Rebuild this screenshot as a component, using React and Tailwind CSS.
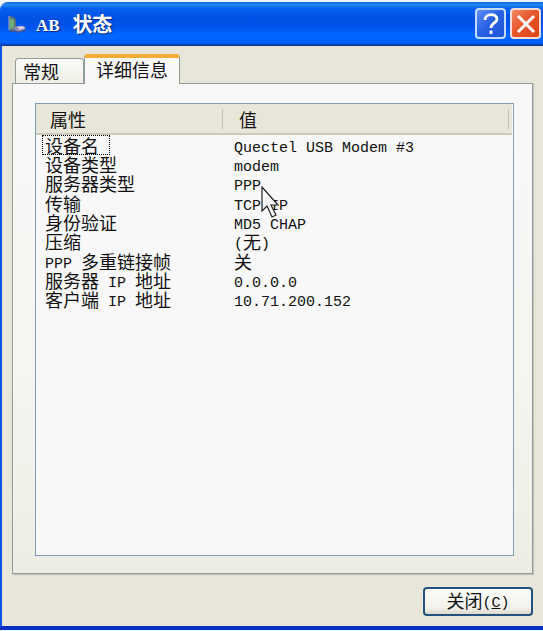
import React, { useState } from 'react';

const rows = [
  { name: '设备名', value: 'Quectel USB Modem #3' },
  { name: '设备类型', value: 'modem' },
  { name: '服务器类型', value: 'PPP' },
  { name: '传输', value: 'TCP/IP' },
  { name: '身份验证', value: 'MD5 CHAP' },
  { name: '压缩', value: '(无)' },
  { name: 'PPP 多重链接帧', value: '关' },
  { name: '服务器 IP 地址', value: '0.0.0.0' },
  { name: '客户端 IP 地址', value: '10.71.200.152' },
];

// Latin runs are set in a half-width mono face, Chinese runs in the full-width face
const MixedText = ({ children }) =>
  children.split(/([\x20-\x7e]+)/).filter(Boolean).map((part, i) =>
    /^[\x20-\x7e]/.test(part) ? (
      <span key={i} className="font-['Liberation_Mono',monospace] text-[15px] leading-[0px] align-[1px] whitespace-pre">{part}</span>
    ) : (
      <span key={i}>{part}</span>
    )
  );

const ConnectionIcon = () => (
  <svg className="w-5 h-5 shrink-0" viewBox="0 0 20 20" aria-hidden="true">
    <path d="M1 2l5 1 2 3v8l-3 4-4-2z" fill="#56727c" />
    <path d="M2 4l4 2v7l-4 2z" fill="#6fae78" />
    <path d="M1 2v14" stroke="#a9b4b8" />
    <path d="M4 14l5-2 7 0 2 3-8 3z" fill="#8d88ae" />
    <path d="M9 13l5-1 3 2-5 2z" fill="#d6cfe2" />
    <path d="M2 17l8 1 8-2" stroke="#514f78" fill="none" />
  </svg>
);

const Cursor = () => (
  <svg className="absolute z-10 left-[27px] top-3 w-[21px] h-[32px] pointer-events-none" viewBox="0 0 21 32" aria-hidden="true">
    <path d="M1 1v24l5-5 5 11 4-2-5-10h7z" fill="#f8f8f8" stroke="#222" strokeWidth="1.2" />
  </svg>
);

const TitleBar = () => (
  <header className="flex items-center h-11 pl-2 pr-0 rounded-tl-lg border-b border-[#123a91] bg-[linear-gradient(#1264dc_0%,#2288ff_7%,#0562ee_14%,#0050e4_38%,#0055ee_60%,#0066ff_75%,#0062ff_94%,#0041bd_100%)]">
    <ConnectionIcon />
    <h1 className="flex-1 pl-2 text-xl leading-6 font-bold text-white [text-shadow:1px_1px_1px_#0a2a80]">
      <span className="font-['Liberation_Serif',serif] text-[17px] leading-[0px] align-[1px] whitespace-pre">AB   </span>
      状态
    </h1>
    <div className="flex gap-1 pr-0.5">
      <button type="button" aria-label="帮助" className="flex items-center justify-center w-[31px] h-[31px] rounded-[4px] border-2 border-[#c3dcfa] bg-[linear-gradient(135deg,#6290f5,#2a62e6_45%,#1c54d8)]">
        <svg className="w-6 h-6 shrink-0" viewBox="0 0 24 24" fill="none" stroke="#fff" strokeWidth="2.8">
          <path d="M6 8c0-7 12-7 12-1 0 4-6 4-6 9M12 18.500v3.500" />
        </svg>
      </button>
      <button type="button" aria-label="关闭窗口" className="flex items-center justify-center w-[31px] h-[31px] rounded-[4px] border-2 border-[#f5dcd8] bg-[linear-gradient(135deg,#f08a66,#e8562a_45%,#dd4414)]">
        <svg className="w-6 h-6 shrink-0" viewBox="0 0 24 24" fill="none" stroke="#fff" strokeWidth="3">
          <path d="M4 4l16 16M20 4L4 20" />
        </svg>
      </button>
    </div>
  </header>
);

const Tabs = ({ active, onChange }) => (
  <div role="tablist" className="flex items-end pl-[3px]">
    <button
      type="button"
      role="tab"
      aria-selected={active === 'general'}
      onClick={() => onChange('general')}
      className="w-[69px] h-[25px] pl-[7px] text-left rounded-t-[4px] border border-b-0 border-[#919b9c] bg-[linear-gradient(#fcfcfa,#efeee5)] text-lg leading-6"
    >
      常规
    </button>
    <button
      type="button"
      role="tab"
      aria-selected={active === 'details'}
      onClick={() => onChange('details')}
      className="relative w-24 h-[30px] -mb-px pb-1 rounded-t-[4px] border border-t-4 border-b-0 border-[#919b9c] border-t-[#f4ad32] bg-[#f8f8f8] text-lg leading-[22px]"
    >
      详细信息
    </button>
  </div>
);

const DetailsTable = () => (
  <div className="flex-1 border border-[#7f9db9] bg-[#f8f8f8] pr-px">
    <table className="w-full table-fixed border-separate border-spacing-0 text-left">
      <colgroup>
        <col className="w-[188px]" />
        <col />
      </colgroup>
      <thead>
        <tr className="bg-[#e7e6d8]">
          <th scope="col" className="h-[31px] p-0 border-b-2 border-[#cdc9b8] font-normal leading-6">
            <div className="pl-[14px] mr-px border-r border-[#c3c0b0] leading-5">属性</div>
          </th>
          <th scope="col" className="h-[31px] p-0 border-b-2 border-[#cdc9b8] font-normal leading-6">
            <div className="pl-[15px] mr-[3px] border-r border-[#c3c0b0] leading-5">值</div>
          </th>
        </tr>
      </thead>
    </table>
    <table className="w-full h-[174px] table-fixed border-separate border-spacing-0 text-left">
      <colgroup>
        <col className="w-[188px]" />
        <col />
      </colgroup>
      <tbody>
        {rows.map((row, i) => (
          <tr key={row.name}>
            <th scope="row" className="p-0 pl-[7px] font-normal leading-[18px] whitespace-nowrap">
              <span className={i === 0 ? 'block w-[66px] pl-0.5 outline-1 outline-dotted outline-black' : 'block pl-0.5'}>
                <MixedText>{row.name}</MixedText>
              </span>
            </th>
            <td className="p-0 pl-[10px] leading-[18px] whitespace-nowrap">
              <div className="relative">
                <MixedText>{row.value}</MixedText>
                {row.name === '服务器类型' && <Cursor />}
              </div>
            </td>
          </tr>
        ))}
      </tbody>
    </table>
  </div>
);

const App = () => {
  const [tab, setTab] = useState('details');

  return (
    <div className="flex flex-col min-h-screen pt-0.5 pb-px bg-[#eef4f6] font-['Noto_Sans_CJK_SC',sans-serif] text-lg text-[#111]">
      <div className="flex flex-col flex-1 rounded-tl-lg border-b-4 border-[#0831c4] bg-[#e7e6d8]">
        <TitleBar />
        <main className="flex flex-col flex-1 pl-[10px] pr-[10px] pt-2 pb-[10px] border-l-2 border-[#0a55e6]">
          <Tabs active={tab} onChange={setTab} />
          <section role="tabpanel" className="flex flex-col flex-1 pl-[22px] pt-[19px] pb-[17px] pr-[18px] border border-[#919b9c] bg-[linear-gradient(#f8f8f8_0%,#f5f5f1_60%,#eeede4_100%)] shadow-[1px_1px_1px_#c5c4b8]">
            {tab === 'details' && <DetailsTable />}
          </section>
          <div className="flex justify-end pt-[13px]">
            <button type="button" className="w-[110px] h-[29px] pb-1 rounded-[4px] border-2 border-[#24517f] bg-[linear-gradient(#fdfdfc,#f2f1eb_75%,#dcd8cb)] leading-5">
              关闭
              <span className="font-['Liberation_Mono',monospace] text-[15px] leading-[0px] align-[1px]">(<u>C</u>)</span>
            </button>
          </div>
        </main>
      </div>
    </div>
  );
};

export default App;
